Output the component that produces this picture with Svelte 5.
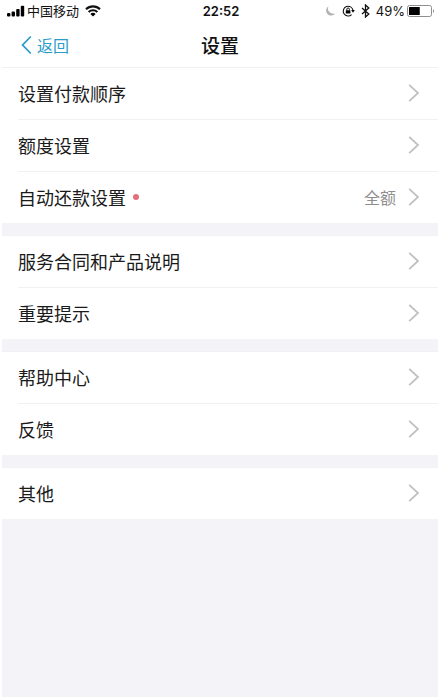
<script lang="ts">
  interface Item {
    label: string;
    value?: string;
    dot?: boolean;
  }

  const groups: Item[][] = [
    [
      { label: "设置付款顺序" },
      { label: "额度设置" },
      { label: "自动还款设置", value: "全额", dot: true },
    ],
    [{ label: "服务合同和产品说明" }, { label: "重要提示" }],
    [{ label: "帮助中心" }, { label: "反馈" }],
    [{ label: "其他" }],
  ];

  const battery = 49;
</script>

<div class="screen">
  <div class="status">
    <div class="status-left">
      <svg width="18" height="12" viewBox="0 0 18 12" aria-hidden="true">
        <rect x="0" y="8" width="3.4" height="3.4" rx="1" />
        <rect x="4.6" y="6.4" width="3.4" height="5" rx="1" />
        <rect x="9.2" y="4" width="3.4" height="7.4" rx="1" />
        <rect x="13.8" y="0.8" width="3.4" height="10.6" rx="1" />
      </svg>
      <span class="carrier">中国移动</span>
      <svg width="16" height="12" viewBox="0 0 16 12" aria-hidden="true">
        <path d="M1 4.2a10 10 0 0 1 14 0M3.6 7a6.4 6.4 0 0 1 8.8 0" fill="none" stroke="#111" stroke-width="2.1" />
        <path d="M5.4 8.9a3.8 3.8 0 0 1 5.2 0L8 11.6z" />
      </svg>
    </div>
    <span class="time">22:52</span>
    <div class="status-right">
      <svg width="11" height="12" viewBox="0 0 11 12" aria-hidden="true">
        <path d="M3.6 1.2A5 5 0 1 0 10.2 8.4A5.2 5.2 0 0 1 3.6 1.2z" fill="#b0b0b3" />
      </svg>
      <svg width="13" height="12" viewBox="0 0 13 12" aria-hidden="true">
        <path d="M9.6 9.6A4.9 4.9 0 1 1 11 5.4" fill="none" stroke="#111" stroke-width="1.1" />
        <path d="M9.2 5h3.6l-1.8 2.8z" />
        <rect x="3.8" y="5.2" width="4.6" height="3.4" rx="0.5" />
        <path d="M4.8 5.4V4.3a1.3 1.3 0 0 1 2.6 0v1.1" fill="none" stroke="#111" />
      </svg>
      <svg width="9" height="14" viewBox="0 0 9 14" aria-hidden="true">
        <path d="M1 4l6.8 6L4.5 13V1l3.3 3L1 10" fill="none" stroke="#111" stroke-width="1.3" />
      </svg>
      <span class="percent">{battery}%</span>
      <svg class="battery" width="28" height="13" viewBox="0 0 28 13" aria-hidden="true">
        <rect x="0.5" y="0.5" width="24" height="11" rx="2" fill="#fff" stroke="#8e8e8e" />
        <rect x="2" y="2" width={(battery / 100) * 22} height="8" rx="0.5" />
        <path d="M26 4.2c1.4.4 1.4 3.2 0 3.6z" fill="#8e8e8e" />
      </svg>
    </div>
  </div>

  <header>
    <a class="back" href="#back">
      <svg width="11" height="20" viewBox="0 0 11 20" aria-hidden="true">
        <path d="M9.8 1.5L1.6 10l8.2 8.5" fill="none" stroke="currentColor" stroke-width="1.8" />
      </svg>
      返回
    </a>
    <h1>设置</h1>
  </header>

  <main>
    {#each groups as group}
      <ul>
        {#each group as item}
          <li>
            <button type="button">
              <span>{item.label}</span>
              {#if item.dot}
                <i class="dot"></i>
              {/if}
              <span class="value">{item.value ?? ""}</span>
              <svg width="12" height="20" viewBox="0 0 12 20" aria-hidden="true">
                <path d="M1.2 1.8L10 10l-8.8 8.2" fill="none" stroke="#c0c0c3" stroke-width="1.8" />
              </svg>
            </button>
          </li>
        {/each}
      </ul>
    {/each}
  </main>
</div>

<style>
  :global(body) {
    margin: 0;
    background: #fff;
  }

  .screen {
    display: flex;
    flex-direction: column;
    min-height: 100vh;
    font-family: "Noto Sans CJK SC", sans-serif;
    color: #111;
  }

  .status {
    display: grid;
    grid-template-columns: 1fr auto 1fr;
    align-items: center;
    height: 22px;
    padding: 0 5px 0 7px;
    font-size: 13px;
    line-height: 22px;
  }

  .status-left,
  .status-right {
    display: flex;
    align-items: center;
  }

  .status-right {
    justify-content: flex-end;
    gap: 6px;
  }

  .carrier {
    margin: 0 6px 0 2px;
  }

  .time {
    font-family: Inter, sans-serif;
    font-weight: 600;
  }

  .percent {
    font-family: Inter, sans-serif;
  }

  .battery {
    margin-left: -4px;
  }

  header {
    display: grid;
    grid-template-columns: 1fr auto 1fr;
    align-items: center;
    height: 45px;
    padding: 0 21px;
  }

  .back {
    display: flex;
    align-items: center;
    gap: 5px;
    color: #2b9cc9;
    font-size: 16px;
    line-height: 24px;
    text-decoration: none;
  }

  h1 {
    margin: 0;
    font-size: 19px;
    font-weight: 500;
    line-height: 28px;
  }

  main {
    flex: 1;
    margin: 0 2px;
    background: #f3f3f8;
  }

  ul {
    margin: 0 0 12px;
    padding: 0;
    list-style: none;
    background: #fff;
  }

  li {
    position: relative;
  }

  li::before {
    content: "";
    position: absolute;
    top: 0;
    left: 16px;
    right: 0;
    height: 1px;
    background: #f1f1f3;
  }

  li:first-child::before {
    left: 0;
  }

  button {
    display: flex;
    align-items: center;
    width: 100%;
    height: 52px;
    padding: 0 18px 0 16px;
    border: 0;
    background: none;
    color: #1a1a1a;
    font-family: inherit;
    font-size: 18px;
    line-height: 26px;
    text-align: left;
  }

  .dot {
    width: 6px;
    height: 6px;
    margin-left: 7px;
    border-radius: 50%;
    background: #e5707c;
  }

  .value {
    margin-left: auto;
    margin-right: 12px;
    color: #8e8e90;
    font-size: 16px;
  }
</style>
